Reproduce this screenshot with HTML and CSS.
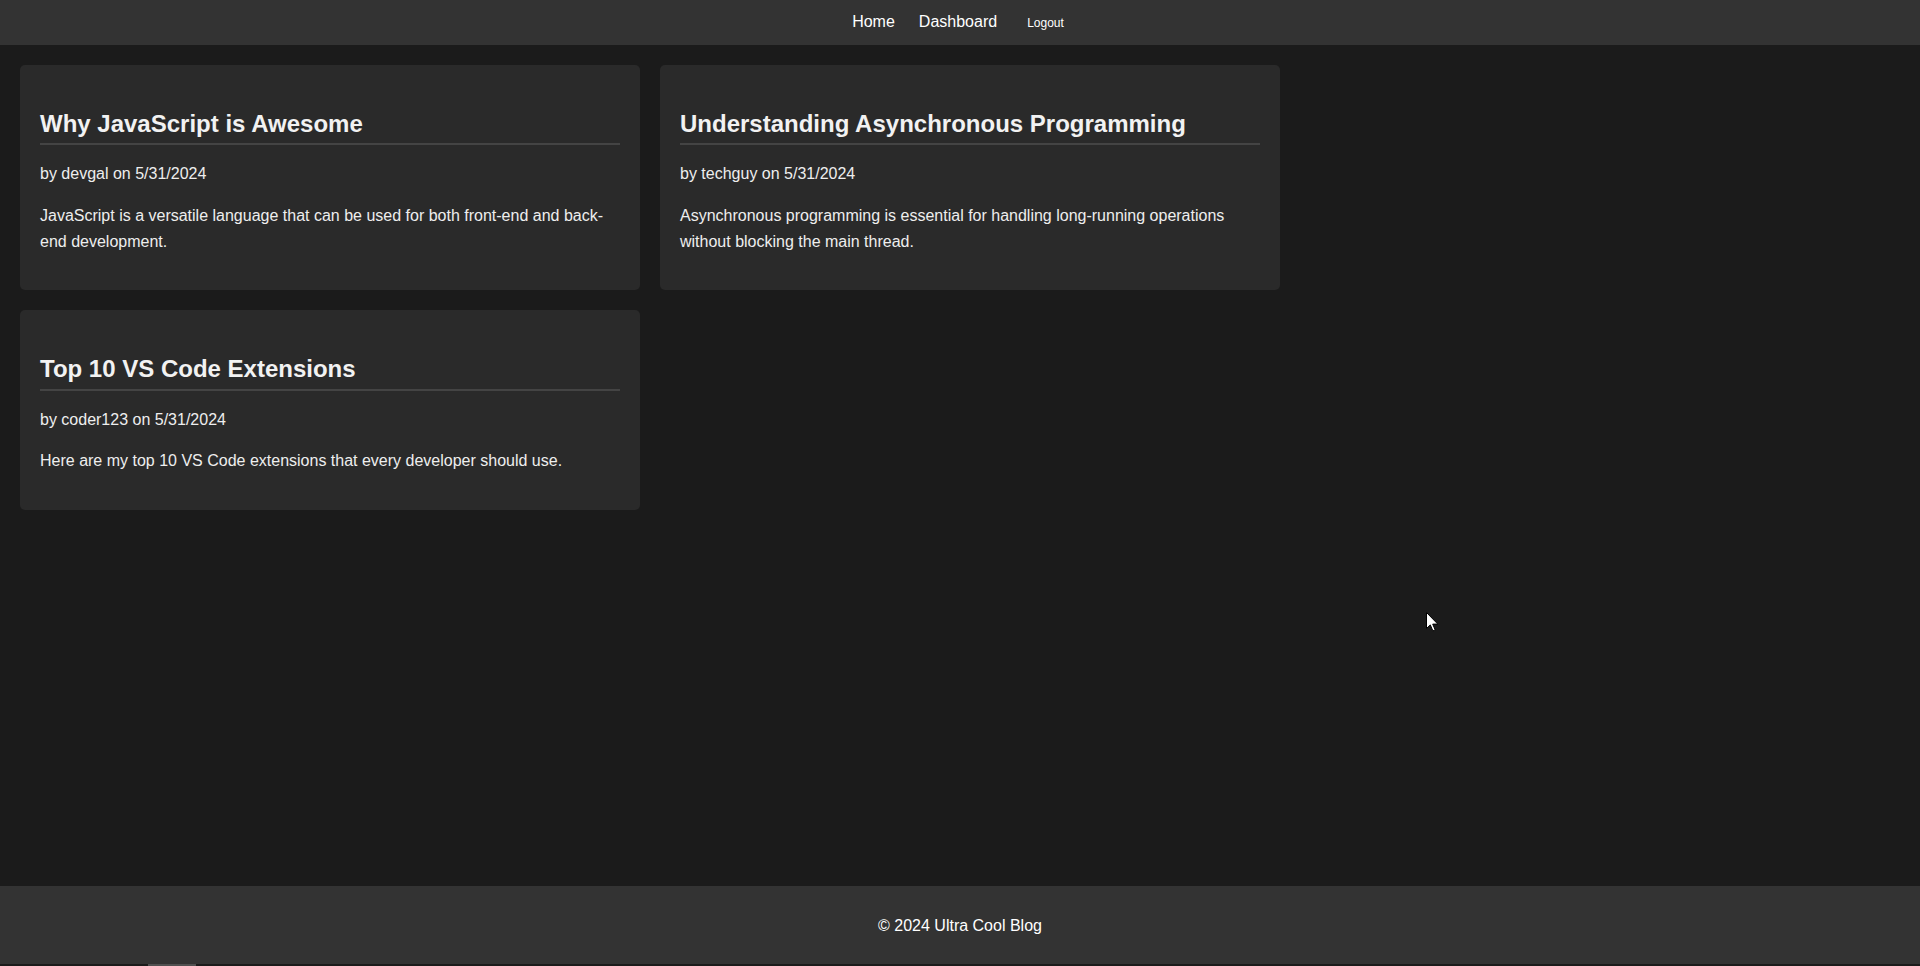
FILE: index.html
```html
<!DOCTYPE html>
<html lang="en">
<head>
<meta charset="utf-8">
<title>Ultra Cool Blog</title>
<link rel="stylesheet" href="styles.css">
</head>
<body>
<header class="site-header">
  <nav class="nav">
    <a class="nav-link" href="#">Home</a>
    <a class="nav-link" href="#">Dashboard</a>
    <a class="nav-link nav-logout" href="#">Logout</a>
  </nav>
</header>
<main class="main">
  <div class="post-grid">
    <article class="post-card">
      <h2 class="post-title">Why JavaScript is Awesome</h2>
      <p class="post-meta">by devgal on 5/31/2024</p>
      <p class="post-body">JavaScript is a versatile language that can be used for both front-end and back-end development.</p>
    </article>
    <article class="post-card">
      <h2 class="post-title">Understanding Asynchronous Programming</h2>
      <p class="post-meta">by techguy on 5/31/2024</p>
      <p class="post-body">Asynchronous programming is essential for handling long-running operations without blocking the main thread.</p>
    </article>
    <article class="post-card">
      <h2 class="post-title">Top 10 VS Code Extensions</h2>
      <p class="post-meta">by coder123 on 5/31/2024</p>
      <p class="post-body">Here are my top 10 VS Code extensions that every developer should use.</p>
    </article>
  </div>
</main>
<footer class="site-footer">
  <p class="footer-text">&copy; 2024 Ultra Cool Blog</p>
</footer>
<div class="bottom-strip"><div class="strip-thumb"></div></div>
<svg class="cursor" width="13" height="20" viewBox="0 0 13 20" aria-hidden="true">
  <path d="M0.5 0.5 L0.5 16.5 L4.3 12.9 L6.9 18.9 L9.2 17.9 L6.7 12.1 L11.8 12.1 Z" fill="#fff" stroke="#000" stroke-width="1"/>
</svg>
</body>
</html>
```

FILE: styles.css
```css
html, body {
  margin: 0;
  padding: 0;
}

body {
  min-height: 100vh;
  display: flex;
  flex-direction: column;
  background: #1b1b1b;
  color: #eeeeee;
  font-family: "Liberation Sans", Arial, sans-serif;
  font-size: 16px;
  line-height: 1.6;
}

.site-header {
  height: 45px;
  box-sizing: border-box;
  padding-bottom: 2px;
  background: #333333;
  display: flex;
  align-items: center;
  justify-content: center;
  flex-shrink: 0;
}

.nav {
  display: flex;
  align-items: baseline;
  margin-left: -4px;
  line-height: normal;
}

.nav-link {
  color: #ffffff;
  text-decoration: none;
  font-size: 16px;
  margin: 0 12px;
}

.nav-logout {
  font-size: 12px;
  margin-left: 18px;
}

.main {
  flex: 1;
  padding: 20px;
}

.post-grid {
  display: grid;
  grid-template-columns: repeat(2, 620px);
  gap: 20px;
  align-items: start;
}

.post-card {
  background: #2a2a2a;
  border-radius: 5px;
  padding: 20px;
}

.post-title {
  font-size: 24px;
  font-weight: bold;
  color: #f2f2f2;
  margin: 20px 0 16px;
  border-bottom: 2px solid #444444;
}

.post-meta {
  margin: 0 0 16px;
  color: #eeeeee;
}

.post-body {
  margin: 0 0 16px;
  color: #eeeeee;
}

.site-footer {
  background: #333333;
  flex-shrink: 0;
  padding: 27px 0 25px;
  text-align: center;
}

.footer-text {
  margin: 0;
  color: #ffffff;
}

.bottom-strip {
  height: 2px;
  background: #1b1b1b;
  flex-shrink: 0;
}

.strip-thumb {
  width: 48px;
  height: 2px;
  margin-left: 148px;
  background: #505050;
}

.cursor {
  position: fixed;
  left: 1426px;
  top: 612px;
}
```
